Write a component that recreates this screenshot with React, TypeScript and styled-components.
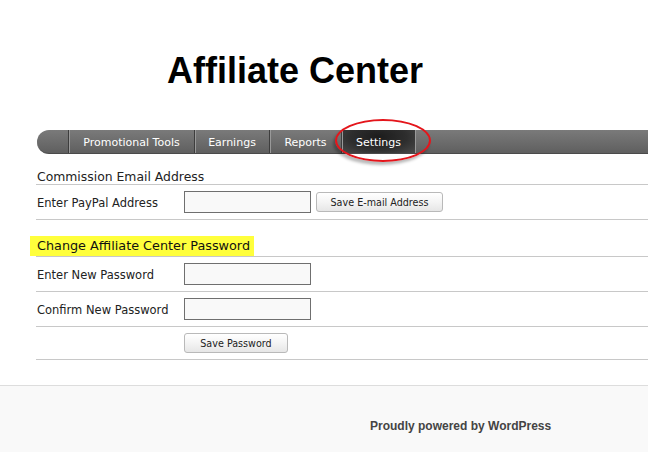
import React from 'react';
import styled, { createGlobalStyle } from 'styled-components';

const GlobalStyle = createGlobalStyle`
  html, body {
    margin: 0;
    padding: 0;
    background: #ffffff;
    overflow: hidden;
  }
  body {
    font-family: "DejaVu Sans", Verdana, sans-serif;
  }
`;

const Page = styled.div`
  width: 648px;
  height: 452px;
  display: flex;
  flex-direction: column;
  overflow: hidden;
`;

const Title = styled.h1`
  margin: 0;
  padding: 49px 0 0 167px;
  font-family: "Liberation Sans", Arial, sans-serif;
  font-size: 36px;
  line-height: 43px;
  font-weight: 700;
  color: #000;
`;

const Content = styled.div`
  margin-left: 36px;
  width: 640px;
`;

const NavWrap = styled.div`
  position: relative;
  margin-top: 38px;
`;

const NavBar = styled.ul`
  display: flex;
  margin: 0 0 0 1px;
  padding: 0;
  list-style: none;
  height: 24px;
  border-radius: 12px 0 0 12px;
  background: linear-gradient(#7a7a7a, #6a6a6a 60%, #5f5f5f);
  border-bottom: 1px solid #4a4a4a;
  box-sizing: border-box;
`;

const NavCap = styled.li`
  width: 31px;
`;

const NavItem = styled.li<{ $w: number; $active?: boolean }>`
  display: flex;
  align-items: center;
  justify-content: center;
  box-sizing: border-box;
  width: ${({ $w }) => $w}px;
  height: 100%;
  padding-top: 2px;
  font-size: 11px;
  color: #fff;
  border-left: 1px solid #3d3d3d;
  box-shadow: inset 1px 0 0 #999;
  background: ${({ $active }) =>
    $active
      ? 'radial-gradient(ellipse at 50% 30%, #1c1c1c, #2e2e2e 55%, #4a4a4a)'
      : 'transparent'};
  border-right: ${({ $active }) => ($active ? '1px solid #999' : '0')};
`;

const Circle = styled.div`
  position: absolute;
  left: 299px;
  top: -11px;
  width: 92px;
  height: 39px;
  border: 2px solid #e4151b;
  border-radius: 50%;
  box-shadow: -2px 3px 3px rgba(0, 0, 0, 0.28);
  pointer-events: none;
`;

const SectionHeading = styled.h3<{ $highlight?: boolean }>`
  margin: ${({ $highlight }) => ($highlight ? '16px' : '15px')} 0 0;
  font-size: ${({ $highlight }) => ($highlight ? '12.8px' : '12.4px')};
  font-weight: 400;
  line-height: ${({ $highlight }) => ($highlight ? '20px' : '15px')};
  color: #222;
  border-bottom: 1px solid #c8c8c8;
  padding-left: 1px;
`;

const Marker = styled.span`
  display: inline-block;
  margin-left: -7px;
  padding: 0 4px 0 7px;
  background: #ffff3c;
  color: #111;
`;

const Row = styled.div<{ $short?: boolean }>`
  display: flex;
  align-items: center;
  height: ${({ $short }) => ($short ? '32px' : '34px')};
  border-bottom: 1px solid #c8c8c8;
`;

const Label = styled.label`
  width: 147px;
  padding: 1px 0 0 1px;
  font-size: 11.5px;
  color: #222;
`;

const Field = styled.input`
  width: 127px;
  height: 22px;
  margin: 0;
  padding: 0 3px;
  box-sizing: border-box;
  border: 1px solid #6f6f6f;
  background: #f9f9f9;
`;

const Button = styled.button<{ $w: number; $first?: boolean }>`
  width: ${({ $w }) => $w}px;
  height: 20px;
  margin: 0 0 0 ${({ $first }) => ($first ? '0' : '5px')};
  padding: 0;
  font-family: "DejaVu Sans", Verdana, sans-serif;
  font-size: 9.6px;
  color: #222;
  border: 1px solid #b9b9b9;
  border-radius: 3px;
  background: linear-gradient(#ffffff, #f4f4f4 50%, #e6e6e6);
`;

const Footer = styled.footer`
  margin-top: 25px;
  flex: 1;
  background: #f9f9f9;
  border-top: 1px solid #dddddd;
  padding: 29px 0 0 370px;
`;

const Credit = styled.span`
  font-family: "Liberation Sans", Arial, sans-serif;
  font-size: 12px;
  font-weight: 700;
  color: #444;
`;

const tabs = [
  { label: 'Promotional Tools', w: 126 },
  { label: 'Earnings', w: 75 },
  { label: 'Reports', w: 72 },
];

export default function App() {
  return (
    <Page>
      <GlobalStyle />
      <Title>Affiliate Center</Title>
      <Content>
        <NavWrap>
          <NavBar>
            <NavCap />
            {tabs.map((t) => (
              <NavItem key={t.label} $w={t.w}>
                {t.label}
              </NavItem>
            ))}
            <NavItem $w={75} $active>
              Settings
            </NavItem>
          </NavBar>
          <Circle />
        </NavWrap>

        <SectionHeading>Commission Email Address</SectionHeading>
        <Row>
          <Label>Enter PayPal Address</Label>
          <Field type="text" />
          <Button $w={127}>Save E-mail Address</Button>
        </Row>

        <SectionHeading $highlight>
          <Marker>Change Affiliate Center Password</Marker>
        </SectionHeading>
        <Row>
          <Label>Enter New Password</Label>
          <Field type="password" />
        </Row>
        <Row>
          <Label>Confirm New Password</Label>
          <Field type="password" />
        </Row>
        <Row $short>
          <Label />
          <Button $w={104} $first>
            Save Password
          </Button>
        </Row>
      </Content>
      <Footer>
        <Credit>Proudly powered by WordPress</Credit>
      </Footer>
    </Page>
  );
}
